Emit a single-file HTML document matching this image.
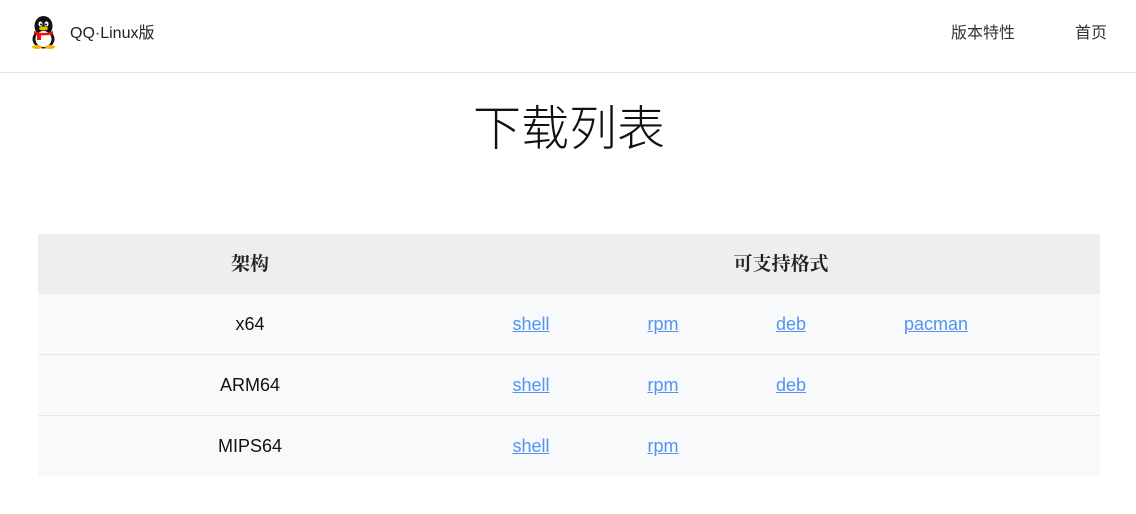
<!DOCTYPE html>
<html><head><meta charset="utf-8"><style>
body{margin:0;width:1136px;height:514px;background:#fff;font-family:"Liberation Sans","Noto Sans CJK SC",sans-serif;position:relative;overflow:hidden;color:#222}
.a{position:absolute;white-space:nowrap}
.hdr{position:absolute;left:0;top:0;width:1136px;height:72px;border-bottom:1px solid #e3e3e3}
.c{transform:translateX(-50%)}
a{color:#5593f0;text-decoration:underline;font-size:18px}
.row{position:absolute;left:38px;width:1062px;height:60px;background:#f8f9fb;border-bottom:1px solid #e6e7ea}
</style></head><body>
<div class="hdr"></div>
<svg class="a" style="left:29px;top:15px" width="29" height="34" viewBox="0 0 29 34">
<ellipse cx="14.5" cy="11" rx="9" ry="10" fill="#111"/>
<ellipse cx="14.5" cy="24" rx="11" ry="9.5" fill="#111"/>
<ellipse cx="14.5" cy="24" rx="8" ry="8" fill="#fff"/>
<ellipse cx="11.5" cy="9" rx="2" ry="2.6" fill="#fff"/><ellipse cx="17.5" cy="9" rx="2" ry="2.6" fill="#fff"/>
<circle cx="12" cy="9.5" r="1" fill="#111"/><circle cx="17" cy="9.5" r="1" fill="#111"/>
<ellipse cx="14.5" cy="13.5" rx="4.5" ry="2" fill="#f5b400"/>
<path d="M5 16 Q14.5 20 24 16 L24 19 Q14.5 22 5 19Z" fill="#e11"/>
<rect x="8" y="18" width="4" height="7" fill="#e11"/>
<ellipse cx="8" cy="32" rx="5" ry="2" fill="#f5b400"/><ellipse cx="21" cy="32" rx="5" ry="2" fill="#f5b400"/>
</svg>
<div class="a" style="left:70px;top:19px;font-size:16px;color:#222">QQ·Linux版</div>
<div class="a" style="left:951px;top:19px;font-size:16px;color:#333">版本特性</div>
<div class="a" style="left:1075px;top:19px;font-size:16px;color:#333">首页</div>
<div class="a c" style="left:569px;top:89px;font-size:48px;color:#111;font-family:'Noto Sans CJK SC',sans-serif;font-weight:300">下载列表</div>
<div class="a" style="left:38px;top:234px;width:1062px;height:60px;background:#edeef0"></div>
<div class="a c" style="left:250px;top:249px;font-size:19px;font-weight:bold;font-family:'Noto Serif CJK SC',serif">架构</div>
<div class="a c" style="left:781px;top:249px;font-size:19px;font-weight:bold;font-family:'Noto Serif CJK SC',serif">可支持格式</div>
<div class="row" style="top:294px"></div>
<div class="row" style="top:355px"></div>
<div class="row" style="top:416px;border-bottom:none"></div>
<div class="a c" style="left:250px;top:314px;font-size:18px;color:#111">x64</div>
<div class="a c" style="left:250px;top:375px;font-size:18px;color:#111">ARM64</div>
<div class="a c" style="left:250px;top:436px;font-size:18px;color:#111">MIPS64</div>
<a class="a c" style="left:531px;top:314px">shell</a><a class="a c" style="left:663px;top:314px">rpm</a><a class="a c" style="left:791px;top:314px">deb</a><a class="a c" style="left:936px;top:314px">pacman</a>
<a class="a c" style="left:531px;top:375px">shell</a><a class="a c" style="left:663px;top:375px">rpm</a><a class="a c" style="left:791px;top:375px">deb</a>
<a class="a c" style="left:531px;top:436px">shell</a><a class="a c" style="left:663px;top:436px">rpm</a>
</body></html>
